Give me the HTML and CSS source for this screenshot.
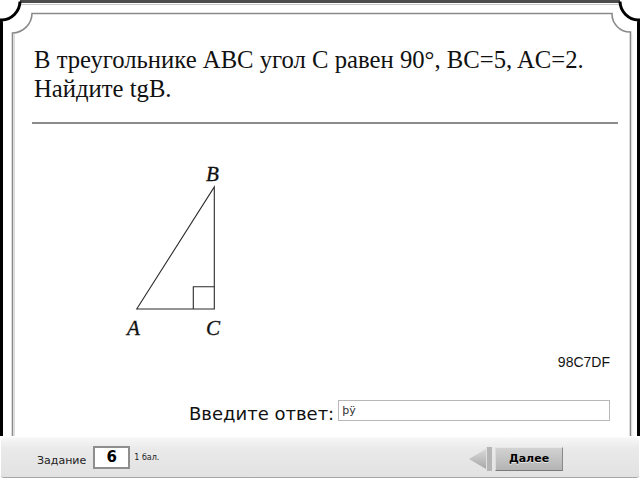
FILE: index.html
```html
<!DOCTYPE html>
<html lang="ru">
<head>
<meta charset="utf-8">
<title>Задание 6</title>
<link rel="stylesheet" href="styles.css">
</head>
<body>
<div class="page">
  <svg class="frame" width="640" height="436" viewBox="0 0 640 436">
    <path d="M20 1.5 L620 1.5" stroke="#4d4d4d" stroke-width="3" fill="none"/>
    <path d="M20 4.5 L620 4.5" stroke="#c8c8c8" stroke-width="1" fill="none"/>
    <path d="M1.5 436 L1.5 20 A19 19 0 0 0 20 1.5" stroke="#000" stroke-width="3" fill="none"/>
    <path d="M620 1.5 A19 19 0 0 0 638.5 20 L638.5 436" stroke="#000" stroke-width="3" fill="none"/>
    <path d="M12.5 436 L12.5 33 A20 20 0 0 0 32 13.5 L612 13.5 A18 18 0 0 0 630.5 32 L630.5 436" stroke="#8a8a8a" stroke-width="1.6" fill="none"/>
    <path d="M14.5 436 L14.5 34 M631.8 34 L631.8 436" stroke="#dcdcdc" stroke-width="1" fill="none"/>
  </svg>
  <div class="content">
    <p class="question">В треугольнике ABC угол C равен 90°, BC=5, AC=2.<br>Найдите tgB.</p>
    <div class="rule"></div>
    <svg class="figure" width="110" height="180" viewBox="0 0 110 180">
      <g stroke="#2a2a2a" stroke-width="1.1" fill="none">
        <path d="M16.7 150 L94.3 28 L94.3 150 Z"/>
        <path d="M73.3 150 L73.3 127.7 L94.3 127.7"/>
      </g>
      <g class="lbl">
        <text x="86" y="22">B</text>
        <text x="7" y="176">A</text>
        <text x="86" y="176">C</text>
      </g>
    </svg>
    <div class="code">98C7DF</div>
    <div class="answer">
      <span class="answer-label">Введите ответ:</span>
      <div class="answer-input">þÿ</div>
    </div>
  </div>
</div>
<div class="bar">
  <span class="task-label">Задание</span>
  <div class="task-num">6</div>
  <span class="points">1 бал.</span>
  <div class="spacer"></div>
  <div class="back">
    <svg width="24" height="24" viewBox="0 0 24 24">
      <defs>
        <linearGradient id="bg1" x1="0" y1="0" x2="0" y2="1">
          <stop offset="0" stop-color="#d8d8d8"/>
          <stop offset="1" stop-color="#a8a8a8"/>
        </linearGradient>
      </defs>
      <path d="M0 12 L17 2 L17 22 Z" fill="url(#bg1)"/>
      <rect x="17" y="0" width="6" height="24" fill="#b5b5b5"/>
      <rect x="17" y="0" width="1" height="24" fill="#e0e0e0"/>
    </svg>
  </div>
  <div class="next">Далее</div>
</div>
</body>
</html>
```
FILE: styles.css
```css
html, body {
  margin: 0;
  padding: 0;
  background: #fff;
  width: 640px;
  height: 480px;
  overflow: hidden;
}

.page {
  position: relative;
  height: 436px;
}

.frame {
  position: absolute;
  left: 0;
  top: 0;
}

.content {
  position: relative;
  display: flex;
  flex-direction: column;
}

.question {
  margin: 0;
  padding: 45px 40px 0 34px;
  font-family: "Liberation Serif", "Times New Roman", serif;
  font-size: 24.7px;
  line-height: 29px;
  color: #111;
}

.rule {
  margin: 19px 22px 0 32px;
  height: 2px;
  background: #8c8c8c;
}

.figure {
  display: block;
  margin: 35px 0 0 120px;
}

.lbl text {
  font-family: "Liberation Serif", "Times New Roman", serif;
  font-style: italic;
  font-size: 21px;
  fill: #111;
  stroke: #111;
  stroke-width: 0.35;
}

.code {
  align-self: flex-end;
  margin: 15px 30px 0 0;
  font-family: "Liberation Sans", Arial, sans-serif;
  font-size: 14px;
  line-height: 16px;
  color: #111;
}

.answer {
  display: flex;
  align-items: flex-start;
  gap: 4px;
  margin: 30px 0 0 189px;
}

.answer-label {
  margin-top: 3px;
  font-family: "DejaVu Sans", sans-serif;
  font-size: 18px;
  line-height: 22px;
  color: #111;
}

.answer-input {
  box-sizing: border-box;
  width: 272px;
  height: 21px;
  border: 1px solid #b8b8b8;
  padding: 1px 3px;
  font-family: "DejaVu Sans", sans-serif;
  font-size: 11px;
  line-height: 17px;
  color: #333;
}

.bar {
  box-sizing: border-box;
  margin: 1px 1px 0 1px;
  height: 41px;
  display: flex;
  align-items: center;
  padding: 0 0 0 36px;
  background: linear-gradient(#f6f6f6, #e9e9e9 30%, #e2e2e2);
  border-top: 1px solid #fafafa;
  border-bottom: 1px solid #a6a6a6;
  border-radius: 3px;
  font-family: "DejaVu Sans", sans-serif;
}

.task-label {
  font-size: 11px;
  color: #222;
  margin-top: 5px;
}

.task-num {
  box-sizing: border-box;
  width: 37px;
  height: 23px;
  margin-left: 7px;
  border: 2px solid #8e8e8e;
  background: #fff;
  font-weight: bold;
  font-size: 15px;
  line-height: 19px;
  text-align: center;
  color: #000;
}

.points {
  margin-left: 4px;
  font-size: 8px;
  color: #222;
}

.spacer {
  flex: 1;
}

.back {
  display: flex;
  margin-top: 2px;
}

.back svg {
  display: block;
}

.next {
  box-sizing: border-box;
  width: 68px;
  height: 24px;
  margin: 2px 76px 0 2px;
  background: linear-gradient(#d2d2d2, #b4b4b4);
  border-top: 1px solid #e8e8e8;
  border-left: 1px solid #dcdcdc;
  border-right: 1px solid #8a8a8a;
  border-bottom: 1px solid #7a7a7a;
  font-weight: bold;
  font-size: 11px;
  line-height: 21px;
  text-align: center;
  color: #000;
  text-shadow: 0 1px 0 #e6e6e6;
}
```
